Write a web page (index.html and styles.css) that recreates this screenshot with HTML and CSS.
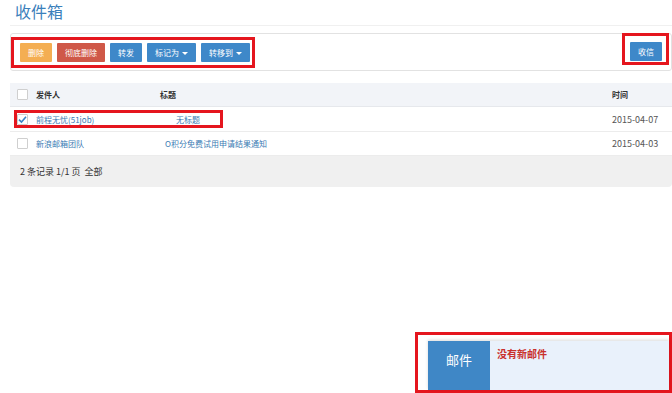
FILE: index.html
```html
<!DOCTYPE html>
<html lang="zh-CN">
<head>
  <meta charset="UTF-8">
  <title>收件箱</title>
  <link rel="stylesheet" href="styles.css">
</head>
<body>
  <div class="page">
    <h1 class="title">收件箱</h1>

    <div class="toolbar">
      <div class="mark mark-left">
        <button class="btn btn-warning">删除</button>
        <button class="btn btn-danger">彻底删除</button>
        <button class="btn btn-primary">转发</button>
        <button class="btn btn-primary btn-drop">标记为 <span class="caret"></span></button>
        <button class="btn btn-primary btn-drop">转移到 <span class="caret"></span></button>
      </div>
      <div class="mark mark-right">
        <button class="btn btn-primary">收信</button>
      </div>
    </div>

    <div class="mail-table">
      <div class="row head">
        <span class="cb"></span>
        <span>发件人</span>
        <span>标题</span>
        <span>时间</span>
      </div>
      <div class="row tall">
        <span class="cb checked">
          <svg width="9" height="9" viewBox="0 0 9 9"><path d="M1 4.6 L3.5 7 L8 1.8" fill="none" stroke="#3a86c8" stroke-width="1.6"/></svg>
        </span>
        <a href="#">前程无忧(51job)</a>
        <a href="#" class="subj-1">无标题</a>
        <span class="date">2015-04-07</span>
      </div>
      <div class="row">
        <span class="cb"></span>
        <a href="#">新浪邮箱团队</a>
        <a href="#" class="subj-2">O积分免费试用申请结果通知</a>
        <span class="date">2015-04-03</span>
      </div>
      <div class="foot">2 条记录 1/1 页 &nbsp;全部</div>
      <div class="mark row-mark"></div>
    </div>
  </div>

  <div class="mark notice-mark">
    <div class="notice">
      <div class="notice-label">邮件</div>
      <div class="notice-body">没有新邮件</div>
    </div>
  </div>
</body>
</html>
```

FILE: styles.css
```css
/* Inbox */
body { margin: 0; background: #fff; color: #333; font-family: "Noto Sans CJK SC", "Liberation Sans", sans-serif; font-size: 8px; overflow: hidden; }
.page { padding-left: 10px; }
a { color: #3a7ab3; text-decoration: none; }

.title {
  margin: 0; padding: 0 0 0 5px; height: 26px; line-height: 23px; box-sizing: border-box;
  font-size: 16px; font-weight: normal; color: #3b80bb;
  border-bottom: 1px solid #f0f0f0;
}

.mark { border: 3px solid #e5161e; box-sizing: border-box; }

.toolbar {
  margin-top: 7px; height: 38px; box-sizing: border-box;
  border: 1px solid #e2e2e2; border-radius: 3px;
  display: flex; justify-content: space-between; align-items: flex-start;
}
.mark-left { display: flex; gap: 5px; margin: 3px 0 0 0; padding: 3px 2px 3px 6px; }
.mark-right { margin: -1px 2px 0 0; padding: 6px 4px 1px 5px; }

.btn {
  height: 19px; padding: 0; border: none; border-radius: 1px; white-space: nowrap;
  color: #fff; font-family: inherit; font-size: 8px; line-height: 19px; cursor: pointer;
}
.btn-warning { background: #f4ae52; width: 32px; }
.btn-danger { background: #cf5848; width: 48px; }
.btn-primary { background: #3e88c9; width: 32px; }
.btn-drop { width: 49px; }
.caret {
  display: inline-block; width: 0; height: 0; vertical-align: middle; margin-left: 1px;
  border-left: 3px solid transparent; border-right: 3px solid transparent; border-top: 3px solid #fff;
}

.mail-table { margin-top: 12px; position: relative; }
.row {
  display: grid; grid-template-columns: 26px 124px 1fr 60px; align-items: center;
  height: 23px; border-bottom: 1px solid #ececec;
}
.row.tall { height: 24px; }
.row.head { background: #f2f4f8; color: #333; font-weight: bold; border-bottom-color: #e6e8ec; }
.cb {
  width: 11px; height: 11px; margin-left: 7px; box-sizing: border-box;
  border: 1px solid #cfcfcf; border-radius: 1px; background: #fff;
  display: flex; align-items: center; justify-content: center;
}
.subj-1 { padding-left: 16px; }
.subj-2 { padding-left: 5px; }
.date { color: #555; font-size: 9px; }

.foot {
  height: 31px; line-height: 31px; padding-left: 10px; font-size: 9px;
  background: #f0f0f0; border-radius: 0 0 4px 4px; color: #333;
}

.row-mark { position: absolute; left: 4px; top: 27px; width: 209px; height: 18px; }

.notice-mark {
  position: fixed; left: 415px; top: 332px; width: 257px; height: 61px;
  padding: 6px 0 0 10px;
}
.notice { display: flex; height: 100%; box-shadow: 0 -1px 3px rgba(0,0,0,.15); }
.notice-label {
  width: 62px; background: #3f87c6; color: #fff; font-size: 13px;
  text-align: center; padding-top: 9px; box-sizing: border-box;
}
.notice-body {
  flex: 1; background: #e9f1fb; color: #c9302c; font-size: 10px; font-weight: bold;
  padding: 5px 0 0 7px;
}
```
